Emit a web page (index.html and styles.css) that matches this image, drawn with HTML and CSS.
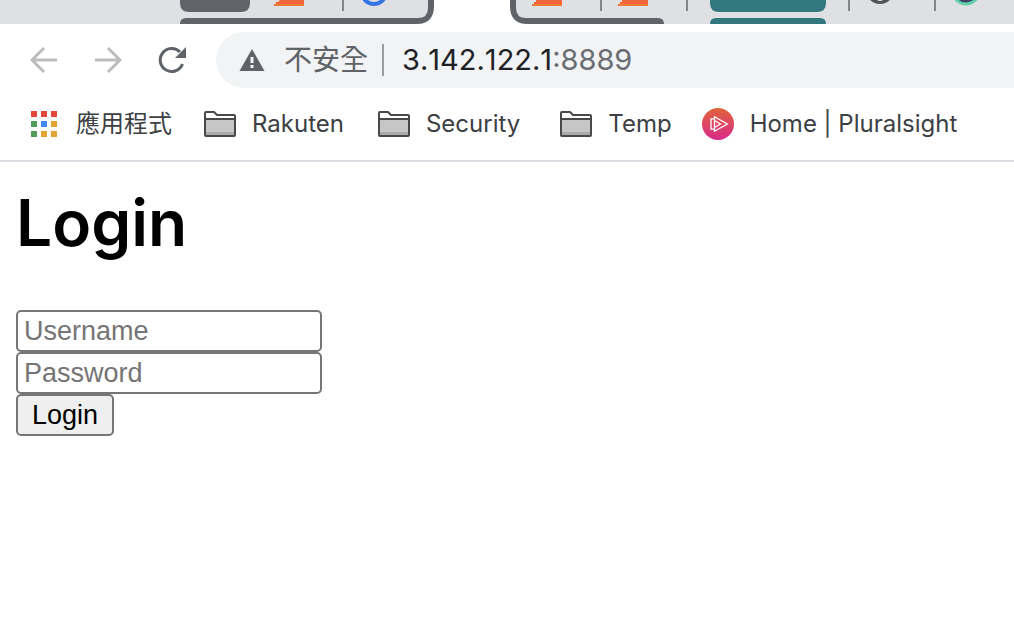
FILE: index.html
```html
<!DOCTYPE html>
<html lang="zh-Hant">
<head>
<meta charset="utf-8">
<meta name="viewport" content="width=device-width, initial-scale=1">
<title>Login</title>
<link rel="stylesheet" href="styles.css">
</head>
<body>
<header class="browser">
  <div class="tabstrip" aria-hidden="true">
    <svg class="tabs-left" width="434" height="24" viewBox="0 0 434 24">
      <path fill="#dfe0e4" d="M0 0H434V4Q434 24 418 24H0Z"/>
      <path fill="#606468" d="M180 24Q180 18 186 18H418Q428 18 428 8V0H434V6Q434 24 416 24Z"/>
      <path fill="#606468" d="M180 0H250V3Q250 12 241 12H189Q180 12 180 3Z"/>
      <path fill="#f1653a" d="M280 0H304V6H274V4H276V2H278Z"/>
      <path fill="#ee7b2f" d="M276 4H304V6H274Z"/>
      <path fill="#86878b" d="M342 0H344V11H342Z"/>
      <circle cx="374" cy="-8" r="12" fill="none" stroke="#3574e2" stroke-width="4"/>
    </svg>
    <div class="tab-active"></div>
    <div class="tabs-right">
      <svg width="504" height="24" viewBox="0 0 504 24">
        <path fill="#dfe0e4" d="M0 0H504V24H18Q0 24 0 6Z"/>
        <path fill="#606468" d="M0 0H6V8Q6 18 16 18H148Q154 18 154 24H18Q0 24 0 6Z"/>
        <path fill="#f1653a" d="M26 0H52V6H22V4H24V2H26Z M112 0H138V6H108V4H110V2H112Z"/>
        <path fill="#ee7b2f" d="M24 4H52V6H22Z M110 4H138V6H108Z"/>
        <path fill="#86878b" d="M90 0H92V11H90Z M176 0H178V11H176Z M338 0H340V11H338Z M424 0H426V11H424Z"/>
        <path fill="#33787f" d="M200 0H316V3Q316 12 307 12H209Q200 12 200 3Z M200 24Q200 18 206 18H310Q316 18 316 24Z"/>
        <circle cx="370" cy="-10" r="14" fill="#505154"/>
        <path fill="#dfe0e4" d="M367 0H373Q372 1 370 1Q368 1 367 0Z"/>
        <circle cx="456" cy="-9" r="13" fill="#3b4262" stroke="#64cfab" stroke-width="3"/>
      </svg>
    </div>
  </div>

  <div class="toolbar">
    <button class="nav" type="button" aria-label="Back"><svg width="28" height="28" viewBox="0 0 28 28"><path fill="none" stroke="#bbbcbe" stroke-width="3" d="M27 14H3M14 2L2 14L14 26"/></svg></button>
    <button class="nav" type="button" aria-label="Forward"><svg width="28" height="28" viewBox="0 0 28 28"><path fill="none" stroke="#bbbcbe" stroke-width="3" d="M1 14H25M14 2L26 14L14 26"/></svg></button>
    <button class="nav" type="button" aria-label="Reload"><svg width="28" height="28" viewBox="0 0 28 28"><path fill="none" stroke="#5f6368" stroke-width="3" d="M22 6A11.500 11.500 0 1 0 24.500 18"/><path fill="#5f6368" d="M28 1V12H17Z"/></svg></button>
    <div class="address">
      <svg width="26" height="24" viewBox="0 0 26 24"><path fill="#5f6368" d="M13 1L25.500 23H.500Z"/><path fill="#f1f3f4" d="M11.500 9H14.500V15H11.500Z M11.500 17H14.500V20H11.500Z"/></svg>
      <span class="security">不安全</span>
      <span class="divider"></span>
      <span class="url">3.142.122.1<span class="port">:8889</span></span>
    </div>
  </div>

  <nav class="bookmarks" aria-label="Bookmarks">
    <a class="bookmark apps" href="#"><svg width="28" height="28" viewBox="0 0 28 28"><path fill="#e2473b" d="M1 1h6v6H1zM11 1h6v6h-6zM21 1h6v6h-6z"/><path fill="#529b5b" d="M1 11h6v6H1zM1 21h6v6H1z"/><path fill="#4088ed" d="M11 11h6v6h-6z"/><path fill="#e5a336" d="M21 11h6v6h-6zM11 21h6v6h-6zM21 21h6v6h-6z"/></svg><span>應用程式</span></a>
    <a class="bookmark" href="#"><svg width="32" height="26" viewBox="0 0 32 26"><path fill="#fff" stroke="#484848" stroke-width="2" stroke-linejoin="round" d="M1 24V2Q1 1 2 1H10L13 4H30Q31 4 31 5V24Q31 25 30 25H2Q1 25 1 24Z"/><path fill="#c6c6c6" d="M2 9H30V24H2Z"/><path fill="#aaa" d="M2 21H30V24H2Z"/><path fill="#484848" d="M1 7H31V9H1Z"/></svg><span>Rakuten</span></a>
    <a class="bookmark wide" href="#"><svg width="32" height="26" viewBox="0 0 32 26"><path fill="#fff" stroke="#484848" stroke-width="2" stroke-linejoin="round" d="M1 24V2Q1 1 2 1H10L13 4H30Q31 4 31 5V24Q31 25 30 25H2Q1 25 1 24Z"/><path fill="#c6c6c6" d="M2 9H30V24H2Z"/><path fill="#aaa" d="M2 21H30V24H2Z"/><path fill="#484848" d="M1 7H31V9H1Z"/></svg><span>Security</span></a>
    <a class="bookmark narrow" href="#"><svg width="32" height="26" viewBox="0 0 32 26"><path fill="#fff" stroke="#484848" stroke-width="2" stroke-linejoin="round" d="M1 24V2Q1 1 2 1H10L13 4H30Q31 4 31 5V24Q31 25 30 25H2Q1 25 1 24Z"/><path fill="#c6c6c6" d="M2 9H30V24H2Z"/><path fill="#aaa" d="M2 21H30V24H2Z"/><path fill="#484848" d="M1 7H31V9H1Z"/></svg><span>Temp</span></a>
    <a class="bookmark" href="#"><svg width="32" height="32" viewBox="0 0 32 32"><defs><linearGradient id="brand" x1="0" y1="0" x2="0" y2="1"><stop offset="0" stop-color="#e0643a"/><stop offset="1" stop-color="#da2a8b"/></linearGradient></defs><circle cx="16" cy="16" r="16" fill="url(#brand)"/><path fill="none" stroke="#fff" stroke-width="1.300" d="M12.500 8.800L25.300 16L12.500 23.200Z M12 10.800H9V21.200H12 M12.500 12.500L18.500 16L12.500 19.500"/></svg><span>Home | Pluralsight</span></a>
  </nav>
</header>

<main class="page">
  <h1>Login</h1>
  <form class="login">
    <input type="text" placeholder="Username" aria-label="Username">
    <input type="password" placeholder="Password" aria-label="Password">
    <button type="button">Login</button>
  </form>
</main>
</body>
</html>
```
FILE: styles.css
```css
* { box-sizing: border-box; }

body {
  margin: 0;
  background: #fff;
  font-family: Inter, "Noto Sans CJK TC", sans-serif;
  overflow-x: hidden;
}

svg { display: block; flex: none; }

.browser { border-bottom: 2px solid #dadbe0; }

.tabstrip { display: flex; height: 24px; overflow: hidden; }
.tab-active { flex: none; width: 76px; }
.tabs-right {
  flex: 1;
  min-width: 0;
  background: linear-gradient(90deg, transparent 40px, #dfe0e4 40px);
}

.toolbar { display: flex; align-items: center; padding: 8px 0 0 30px; }
.nav {
  flex: none;
  margin-right: 36px;
  padding: 0;
  border: 0;
  background: none;
}
.nav:nth-child(3) { margin-right: 30px; }

.address {
  flex: 1;
  display: flex;
  align-items: center;
  height: 56px;
  padding-left: 23px;
  border-radius: 28px 0 0 28px;
  background: #f1f3f4;
  white-space: nowrap;
}
.security { margin-left: 19px; color: #5f6368; font-size: 28px; line-height: 40px; }
.divider { width: 2px; height: 32px; margin: 0 18px 0 14px; background: #9a9da1; }
.url { color: #202124; font-size: 29px; line-height: 40px; font-kerning: none; }
.port { color: #6a6d71; }

.bookmarks {
  display: flex;
  align-items: center;
  height: 72px;
  padding-left: 30px;
  white-space: nowrap;
}
.bookmark {
  display: flex;
  align-items: center;
  gap: 16px;
  margin-right: 34px;
  color: #3c4043;
  font-size: 24px;
  line-height: 32px;
  text-decoration: none;
}
.bookmark.apps { gap: 18px; margin-right: 32px; }
.bookmark.wide { margin-right: 40px; }
.bookmark.narrow { margin-right: 30px; }

.page { padding: 16px; }
h1 {
  margin: 0 0 42px;
  font-size: 64px;
  font-weight: 600;
  line-height: 90px;
}

.login { display: flex; flex-direction: column; align-items: flex-start; }
.login input,
.login button {
  height: 42px;
  border: 2px solid #767676;
  border-radius: 5px;
  font-family: "Liberation Sans", Arial, sans-serif;
  font-size: 27px;
  line-height: 32px;
}
.login input { width: 306px; max-width: 100%; padding: 0 6px; background: #fff; }
.login input::placeholder { color: #757575; }
.login button { padding: 0 14px; background: #efefef; color: #000; }
```
